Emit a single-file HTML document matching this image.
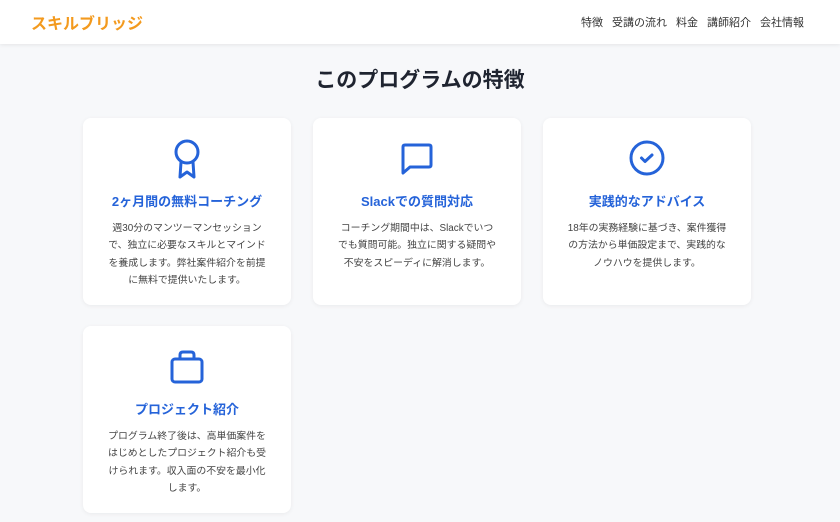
<!DOCTYPE html>
<html><head><meta charset="utf-8"><style>
*{margin:0;padding:0;box-sizing:border-box}
body{width:840px;height:522px;overflow:hidden;background:#f7f8fa;font-family:"Liberation Sans","Noto Sans CJK JP",sans-serif;}
header{height:44px;background:#fff;box-shadow:0 1px 4px rgba(0,0,0,.08);position:relative}
.logo{position:absolute;left:31px;top:10px;font-size:16px;font-weight:bold;color:#f39a1e}
nav{position:absolute;right:36px;top:14px;font-size:11px;color:#333}
nav span{margin-left:9px}
h1{position:absolute;top:64px;width:100%;text-align:center;font-size:21px;font-weight:bold;color:#1f2430}
.card{position:absolute;width:208px;height:187px;background:#fff;border-radius:8px;box-shadow:0 1px 5px rgba(0,0,0,.06);text-align:center}
.card svg{position:absolute;left:86px;top:21px}
.card h3{position:absolute;top:73px;width:100%;font-size:13px;color:#2563d9;font-weight:bold}
.card p{position:absolute;top:102px;left:0;right:0;font-size:9.9px;line-height:17.3px;color:#444;white-space:nowrap}
</style></head><body>
<header><div class="logo">スキルブリッジ</div>
<nav><span>特徴</span><span>受講の流れ</span><span>料金</span><span>講師紹介</span><span>会社情報</span></nav></header>
<h1>このプログラムの特徴</h1>
<div class="card" style="left:83px;top:118px">
<svg width="36" height="40" viewBox="0 0 36 40" fill="none" stroke="#2563d9" stroke-width="3" stroke-linejoin="round"><circle cx="18" cy="13" r="11"/><path d="M12 23 L11 38 L18 33 L25 38 L24 23"/></svg>
<h3>2ヶ月間の無料コーチング</h3>
<p>週30分のマンツーマンセッション<br>で、独立に必要なスキルとマインド<br>を養成します。弊社案件紹介を前提<br>に無料で提供いたします。</p></div>
<div class="card" style="left:313px;top:118px">
<svg width="36" height="40" viewBox="0 0 36 40" fill="none" stroke="#2563d9" stroke-width="3" stroke-linejoin="round"><path d="M4 8 Q4 6 6 6 H30 Q32 6 32 8 V26 Q32 28 30 28 H11 L4 34 Z"/></svg>
<h3>Slackでの質問対応</h3>
<p>コーチング期間中は、Slackでいつ<br>でも質問可能。独立に関する疑問や<br>不安をスピーディに解消します。</p></div>
<div class="card" style="left:543px;top:118px">
<svg width="36" height="40" viewBox="0 0 36 40" fill="none" stroke="#2563d9" stroke-width="3" stroke-linecap="round" stroke-linejoin="round"><circle cx="18" cy="19" r="16"/><path d="M12.5 19 L16 22.5 L23 16"/></svg>
<h3>実践的なアドバイス</h3>
<p>18年の実務経験に基づき、案件獲得<br>の方法から単価設定まで、実践的な<br>ノウハウを提供します。</p></div>
<div class="card" style="left:83px;top:326px">
<svg width="36" height="40" viewBox="0 0 36 40" fill="none" stroke="#2563d9" stroke-width="3" stroke-linejoin="round"><path d="M11 12 V8 Q11 5 14 5 H22 Q25 5 25 8 V12"/><rect x="3" y="12" width="30" height="23" rx="3"/></svg>
<h3>プロジェクト紹介</h3>
<p>プログラム終了後は、高単価案件を<br>はじめとしたプロジェクト紹介も受<br>けられます。収入面の不安を最小化<br>します。</p></div>
</body></html>
